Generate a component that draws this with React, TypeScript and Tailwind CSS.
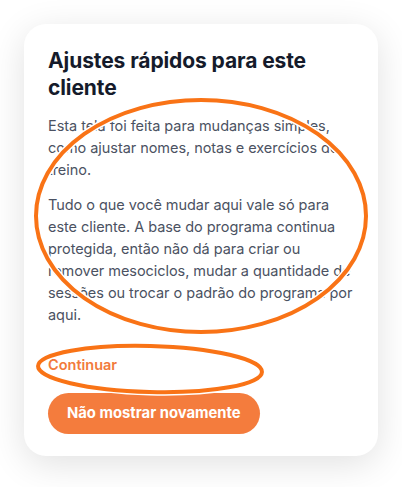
import React from "react";

export default function App() {
  return (
    <div className="relative w-[402px] h-[487px] bg-white overflow-hidden" style={{ fontFamily: "Inter, 'Noto Sans', sans-serif" }}>
      <div className="pt-6 px-6">
        <div className="w-[354px] rounded-[22px] bg-white pl-6 pr-5 pt-[23px] pb-[22px] shadow-[0_8px_36px_rgba(0,0,0,0.12)]">
          <h1 className="text-[21px] leading-[27px] font-bold text-[#151b2b] tracking-[-0.1px]">
            Ajustes rápidos para este cliente
          </h1>
          <p className="mt-[14px] text-[14.5px] leading-[22px] text-[#4b5262] tracking-[-0.05px]">
            Esta tela foi feita para mudanças simples, como ajustar nomes, notas e exercícios do treino.
          </p>
          <p className="mt-[13px] text-[14.5px] leading-[22px] text-[#4b5262] tracking-[-0.05px]">
            Tudo o que você mudar aqui vale só para este cliente. A base do programa continua protegida, então não dá para criar ou remover mesociclos, mudar a quantidade de sessões ou trocar o padrão do programa por aqui.
          </p>
          <div className="mt-[28px] text-[14.5px] leading-[22px] font-semibold text-[#f27a3b]">Continuar</div>
          <button className="mt-[17px] h-[41px] px-[19px] rounded-full bg-[#f47c3d] text-white text-[14.8px] font-bold">
            Não mostrar novamente
          </button>
        </div>
      </div>
      <svg className="absolute inset-0 pointer-events-none" width="402" height="487" viewBox="0 0 402 487">
        <ellipse cx="201" cy="216" rx="165" ry="116" fill="none" stroke="white" strokeWidth="7" />
        <ellipse cx="201" cy="216" rx="165" ry="116" fill="none" stroke="#f97316" strokeWidth="4" />
        <g transform="rotate(1.5 150 369)">
          <ellipse cx="150" cy="369" rx="112" ry="23" fill="none" stroke="white" strokeWidth="7" />
          <ellipse cx="150" cy="369" rx="112" ry="23" fill="none" stroke="#f97316" strokeWidth="4" />
        </g>
      </svg>
    </div>
  );
}
